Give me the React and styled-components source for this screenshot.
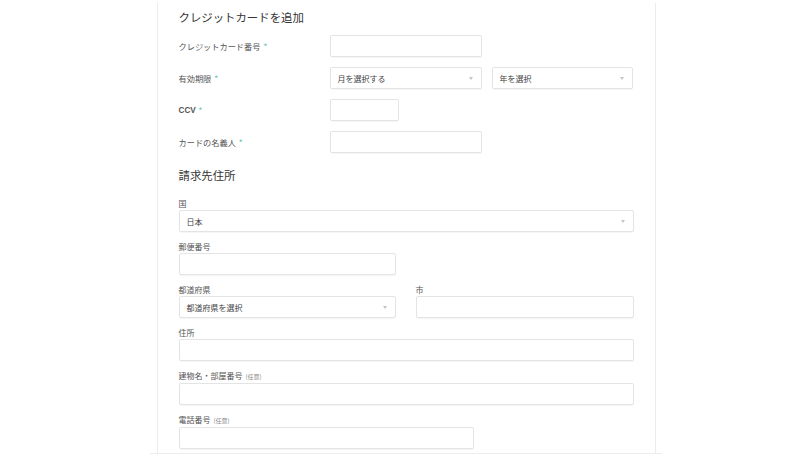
import React from "react";
import styled, { createGlobalStyle } from "styled-components";

const GlobalStyle = createGlobalStyle`
  html, body {
    margin: 0;
    padding: 0;
    background: #fff;
    overflow: hidden;
  }
  body {
    font-family: "Noto Sans CJK JP", "Noto Sans", "Liberation Sans", sans-serif;
    color: #444;
  }
`;

const Page = styled.div`
  width: 812px;
  height: 457px;
  display: flex;
  flex-direction: column;
  align-items: center;
`;

const Card = styled.div`
  width: 455px;
  margin-top: 3px;
  padding: 6px 21px 4px;
  border-left: 1px solid #ececec;
  border-right: 1px solid #ececec;
`;

const BottomLine = styled.div`
  width: 512px;
  border-top: 1px solid #ececec;
`;

const Heading = styled.h2`
  margin: 0;
  font-size: 11.4px;
  font-weight: 400;
  line-height: 16px;
  color: #333;
`;

const CardGrid = styled.div`
  display: grid;
  grid-template-columns: 151px 1fr;
  row-gap: 10px;
  align-items: center;
  margin-top: 10px;
`;

const RowLabel = styled.div`
  font-size: 8.2px;
  color: #555;
  font-weight: ${(p) => (p.$bold ? 700 : 400)};
  font-family: ${(p) =>
    p.$bold ? '"Liberation Sans", "Noto Sans CJK JP", sans-serif' : "inherit"};
`;

const Star = styled.span`
  color: #5fc2a4;
  margin-left: 3px;
  font-weight: 400;
`;

const Controls = styled.div`
  display: flex;
  gap: 10px;
`;

const Box = styled.div`
  box-sizing: border-box;
  width: ${(p) => p.$w || "100%"};
  height: 22px;
  border: 1px solid #e4e4e4;
  border-radius: 2px;
  box-shadow: 0 1px 1px rgba(0, 0, 0, 0.04);
  background: #fff;
`;

const SelectBox = styled(Box)`
  display: flex;
  align-items: center;
  justify-content: space-between;
  padding: 0 8px 0 7px;
  font-size: 8px;
  color: #444;
`;

const Caret = styled.span`
  width: 0;
  height: 0;
  border-left: 2.5px solid transparent;
  border-right: 2.5px solid transparent;
  border-top: 3.5px solid #c4c4c4;
`;

const Section = styled.div`
  margin-top: 14px;
`;

const Fields = styled.div`
  margin-top: 16px;
  display: flex;
  flex-direction: column;
  gap: 10px;
`;

const FieldRow = styled.div`
  display: flex;
  gap: 20px;
`;

const Field = styled.div`
  display: flex;
  flex-direction: column;
  width: ${(p) => p.$w || "100%"};
`;

const Label = styled.label`
  font-size: 8px;
  line-height: 10px;
  margin-bottom: 1px;
  color: #555;
`;

const Optional = styled.span`
  font-size: 6px;
  color: #888;
  margin-left: 3px;
`;

function Select({ value, w }) {
  return (
    <SelectBox $w={w}>
      <span>{value}</span>
      <Caret />
    </SelectBox>
  );
}

export default function App() {
  return (
    <Page>
      <GlobalStyle />
      <Card>
        <Heading>クレジットカードを追加</Heading>
        <CardGrid>
          <RowLabel>
            クレジットカード番号<Star>*</Star>
          </RowLabel>
          <Box $w="152px" />

          <RowLabel>
            有効期限<Star>*</Star>
          </RowLabel>
          <Controls>
            <Select value="月を選択する" w="152px" />
            <Select value="年を選択" w="141px" />
          </Controls>

          <RowLabel $bold>
            CCV<Star>*</Star>
          </RowLabel>
          <Box $w="69px" />

          <RowLabel>
            カードの名義人<Star>*</Star>
          </RowLabel>
          <Box $w="152px" />
        </CardGrid>

        <Section>
          <Heading>請求先住所</Heading>
          <Fields>
            <Field>
              <Label>国</Label>
              <Select value="日本" />
            </Field>
            <Field $w="217px">
              <Label>郵便番号</Label>
              <Box />
            </Field>
            <FieldRow>
              <Field $w="217px">
                <Label>都道府県</Label>
                <Select value="都道府県を選択" />
              </Field>
              <Field $w="218px">
                <Label>市</Label>
                <Box />
              </Field>
            </FieldRow>
            <Field>
              <Label>住所</Label>
              <Box />
            </Field>
            <Field>
              <Label>
                建物名・部屋番号<Optional>(任意)</Optional>
              </Label>
              <Box />
            </Field>
            <Field $w="295px">
              <Label>
                電話番号<Optional>(任意)</Optional>
              </Label>
              <Box />
            </Field>
          </Fields>
        </Section>
      </Card>
      <BottomLine />
    </Page>
  );
}
